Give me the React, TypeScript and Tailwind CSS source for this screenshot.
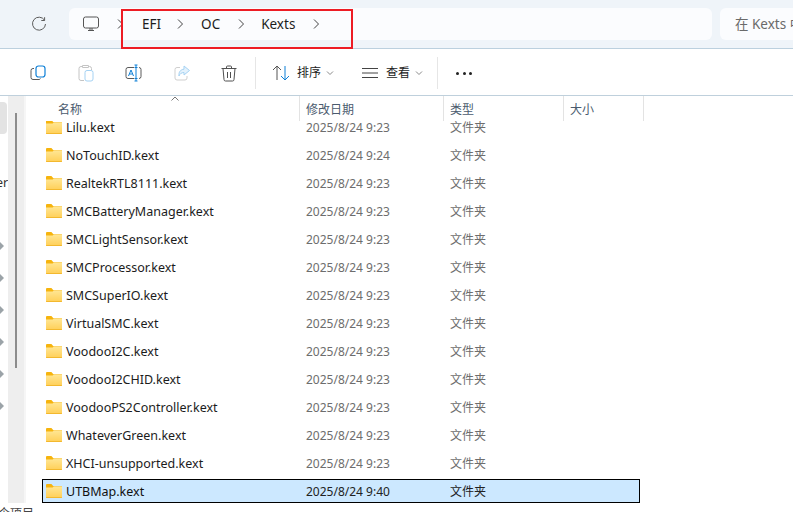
import React from 'react';

const cjk = "font-['Noto_Sans','Noto_Sans_CJK_SC',sans-serif]";

const rows = [
  ['Lilu.kext', '2025/8/24 9:23'],
  ['NoTouchID.kext', '2025/8/24 9:24'],
  ['RealtekRTL8111.kext', '2025/8/24 9:23'],
  ['SMCBatteryManager.kext', '2025/8/24 9:23'],
  ['SMCLightSensor.kext', '2025/8/24 9:23'],
  ['SMCProcessor.kext', '2025/8/24 9:23'],
  ['SMCSuperIO.kext', '2025/8/24 9:23'],
  ['VirtualSMC.kext', '2025/8/24 9:23'],
  ['VoodooI2C.kext', '2025/8/24 9:23'],
  ['VoodooI2CHID.kext', '2025/8/24 9:23'],
  ['VoodooPS2Controller.kext', '2025/8/24 9:23'],
  ['WhateverGreen.kext', '2025/8/24 9:23'],
  ['XHCI-unsupported.kext', '2025/8/24 9:23'],
];

const FolderIcon = () => (
  <svg width="16" height="14" viewBox="0 0 16 13" preserveAspectRatio="none" className="shrink-0">
    <defs>
      <linearGradient id="folderBody" x1="0" y1="0" x2="0" y2="1">
        <stop offset="0" stopColor="#ffe694" />
        <stop offset="1" stopColor="#ffcf57" />
      </linearGradient>
    </defs>
    <path d="M0 1.2C0 .5.5 0 1.2 0h4.2l2 2H16v10.2c0 .5-.3.8-.8.8H.8c-.5 0-.8-.3-.8-.8z" fill="#f6b40e" />
    <path d="M0 3.2h6.6L8 2.4h8v9.8c0 .5-.3.8-.8.8H.8c-.5 0-.8-.3-.8-.8z" fill="url(#folderBody)" />
    <path d="M0 12.2h16v.2c0 .4-.3.6-.7.6H.7c-.4 0-.7-.2-.7-.6z" fill="#f0b020" />
  </svg>
);

const Chevron = () => (
  <svg width="8" height="12" viewBox="0 0 8 12" fill="none" stroke="#444" strokeWidth="1" className="shrink-0">
    <path d="M2 1.5 6.5 6 2 10.5" />
  </svg>
);

const SmallDown = () => (
  <svg width="8" height="6" viewBox="0 0 8 6" fill="none" stroke="#8a8a8a" strokeWidth="1" className="shrink-0">
    <path d="M1 1.5 4 4.5 7 1.5" />
  </svg>
);

const Tri = () => (
  <svg width="4" height="8" viewBox="0 0 4 8" className="block shrink-0">
    <path d="M0 0 4 4 0 8z" fill="#9ba3a8" />
  </svg>
);

const Row = ({ name, date }: { name: string; date: string }) => (
  <div className="ml-4 flex h-6 w-[598px] items-center text-[12.5px]">
    <div className="flex w-[264px] items-center gap-1 pl-1 text-[#1c1c1c]">
      <FolderIcon />
      <span className="pt-[2px]">{name}</span>
    </div>
    <div className="w-[144px] pt-px text-[12px] text-[#6d6d6d]">{date}</div>
    <div className="pt-px text-[12px] text-[#6d6d6d]">文件夹</div>
  </div>
);

export default function App() {
  return (
    <div className={`relative flex h-[512px] w-[793px] flex-col overflow-hidden bg-white ${cjk}`}>
      {/* address bar */}
      <div className="flex h-[49px] shrink-0 items-center gap-2 border-b border-[#bcd0de] bg-[#eff4f9] pl-[69px]">
        <svg width="16" height="16" viewBox="0 0 16 16" fill="none" stroke="#5c5c5c" strokeWidth="1" className="absolute left-[31px] top-[16px]">
          <path d="M13.5 4.2A6.5 6.5 0 1 0 14.5 8" />
          <path d="M13.6 1.2v3.3h-3.3" />
        </svg>
        <div className="flex h-8 w-[643px] shrink-0 items-center rounded-md bg-[#fbfcfe] text-[13.5px] text-[#1c1c1c]">
          <svg width="16" height="16" viewBox="0 0 16 16" fill="none" stroke="#555" strokeWidth="1" className="ml-[14px] shrink-0">
            <rect x=".5" y="1" width="15" height="11" rx="2" />
            <path d="M5 14.5h6M7 12v2.5M9 12v2.5" />
          </svg>
          <div className="ml-[17px]"><Chevron /></div>
          <span className="ml-[18px]">EFI</span>
          <div className="ml-[15px]"><Chevron /></div>
          <span className="ml-[17px]">OC</span>
          <div className="ml-[17px]"><Chevron /></div>
          <span className="ml-[16px]">Kexts</span>
          <div className="ml-[17px]"><Chevron /></div>
        </div>
        <div className="flex h-8 flex-1 items-center rounded-l-md bg-[#fbfcfe] pl-[15px] text-[13.5px] whitespace-nowrap text-[#6a6a6a]">
          在 Kexts 中搜索
        </div>
      </div>

      {/* toolbar */}
      <div className="flex h-[47px] shrink-0 items-center border-b border-[#bfd0dc] bg-white pt-[2px]">
        <svg width="16" height="16" viewBox="0 0 16 16" fill="none" className="ml-[30px] shrink-0">
          <path d="M4 3.5H3A2 2 0 0 0 1 5.500v7A2 2 0 0 0 3 14.500h6a2 2 0 0 0 1.500-1" stroke="#5a5a5a" />
          <rect x="6" y="1" width="9" height="11" rx="2.500" stroke="#0f80d7" strokeWidth="1.200" />
        </svg>
        <svg width="16" height="18" viewBox="0 0 16 18" fill="none" className="ml-[32px] shrink-0">
          <path d="M5 2.500H3a2 2 0 0 0-2 2v10a2 2 0 0 0 2 2h3M10 2.500h1.500a2 2 0 0 1 2 2v1.500M4.500 1.500h6v2h-6z" stroke="#c4c4c4" />
          <rect x="7" y="6.500" width="8" height="10.500" rx="2" stroke="#a5d2f3" />
        </svg>
        <svg width="17" height="18" viewBox="0 0 17 18" fill="none" className="ml-[31px] shrink-0">
          <path d="M9 3.500H3a2 2 0 0 0-2 2v7a2 2 0 0 0 2 2h6M14 3.500a2 2 0 0 1 2 2v7a2 2 0 0 1-2 2" stroke="#5a5a5a" />
          <path d="M9.500 3.500h3M9.500 14.500h3M11 1v16M9.500 1h3M9.500 17h3" stroke="#0f80d7" />
          <path d="M3.500 12 6 6l2.500 6M4.500 10h3" stroke="#0f80d7" />
        </svg>
        <svg width="16" height="16" viewBox="0 0 16 16" fill="none" className="ml-[32px] shrink-0">
          <path d="M6 2.500H3a2 2 0 0 0-2 2v8.500a2 2 0 0 0 2 2h8a2 2 0 0 0 2-2v-2" stroke="#cfcfcf" />
          <path d="M10 1l5.500 4.500L10 10V7.500C7.500 7.500 5.500 9 5 11c-.5-4 1.500-6.500 5-6.800z" stroke="#a5d2f3" fill="#e4f2fc" />
        </svg>
        <svg width="16" height="17" viewBox="0 0 16 17" fill="none" stroke="#505050" className="ml-[31px] shrink-0">
          <path d="M.5 3.500h15M5.500 3.500V2a1 1 0 0 1 1-1h3a1 1 0 0 1 1 1v1.500" />
          <path d="M2 3.500l1 11a1.500 1.500 0 0 0 1.500 1.500h7a1.500 1.500 0 0 0 1.500-1.500l1-11" />
          <path d="M6.500 7v6M9.500 7v6" />
        </svg>
        <div className="ml-[18px] h-8 w-px bg-[#e6e6e6]" />
        <svg width="18" height="16" viewBox="0 0 18 16" fill="none" className="ml-[16px] shrink-0">
          <path d="M5 15V1M1 5l4-4 4 4" stroke="#555" />
          <path d="M13 1v14M9 11l4 4 4-4" stroke="#0f80d7" />
        </svg>
        <span className="ml-[7px] text-[12px] text-[#222]">排序</span>
        <div className="ml-[5px]"><SmallDown /></div>
        <svg width="16" height="12" viewBox="0 0 16 12" fill="none" stroke="#444" className="ml-[28px] shrink-0">
          <path d="M0 1.500h16M0 6h16M0 10.500h16" />
        </svg>
        <span className="ml-[8px] text-[12px] text-[#222]">查看</span>
        <div className="ml-[5px]"><SmallDown /></div>
        <div className="ml-[14px] h-8 w-px bg-[#e6e6e6]" />
        <div className="ml-[18px] flex gap-[3.5px]">
          <span className="h-[3px] w-[3px] rounded-full bg-[#222]" />
          <span className="h-[3px] w-[3px] rounded-full bg-[#222]" />
          <span className="h-[3px] w-[3px] rounded-full bg-[#222]" />
        </div>
      </div>

      {/* main */}
      <div className="flex h-[407px] shrink-0">
        {/* clipped nav pane */}
        <div className="flex w-2 shrink-0 flex-col items-start overflow-hidden">
          <div className="mt-[6px] h-8 w-[7px] rounded-r bg-[#e3e3e3]" />
          <span className="-ml-[4px] mt-[41px] text-[12.5px] leading-4 text-[#333]">er</span>
          <div className="mt-[51px] flex flex-col gap-6">
            <Tri /><Tri /><Tri /><Tri /><Tri /><Tri />
          </div>
        </div>
        {/* nav scrollbar */}
        <div className="w-4 shrink-0 bg-[#eeeeee] pl-[7px] pt-[17px]">
          <div className="h-[255px] w-[2px] bg-[#8c8c8c]" />
        </div>
        {/* file list */}
        <div className="relative flex-1 border-l-2 border-[#f6f6f6]">
          <div className="relative flex h-[25px] items-center text-[12px] text-[#4b5b6e]">
            <svg width="8" height="5" viewBox="0 0 8 5" fill="none" stroke="#777" className="absolute left-[145px] top-0">
              <path d="M.5 4.500 4 1l3.500 3.500" />
            </svg>
            <span className="ml-[32px] w-[241px] pt-[2px]">名称</span>
            <div className="flex h-full w-[144px] items-center border-l border-[#e3e3e3] pl-[6px] pt-[2px]">修改日期</div>
            <div className="flex h-full w-[120px] items-center border-l border-[#e3e3e3] pl-[6px] pt-[2px]">类型</div>
            <div className="flex h-full w-[81px] items-center border-x border-[#e3e3e3] pl-[6px] pt-[2px]">大小</div>
          </div>
          <div className="h-[382px] overflow-hidden">
            <div className="-mt-[6px] flex flex-col gap-1">
              {rows.map(r => (
                <Row key={r[0]} name={r[0]} date={r[1]} />
              ))}
              <div className="ml-4 flex h-6 w-[598px] items-center border border-black bg-[#cce8ff] text-[12.5px]">
                <div className="flex w-[263px] items-center gap-1 pl-[3px] text-[#111]">
                  <FolderIcon />
                  <span className="pt-[2px]">UTBMap.kext</span>
                </div>
                <div className="w-[144px] pt-px text-[12px] text-[#222]">2025/8/24 9:40</div>
                <div className="pt-px text-[12px] text-[#222]">文件夹</div>
              </div>
            </div>
          </div>
        </div>
      </div>

      {/* status bar, cut off by the window edge */}
      <div className="h-[9px] shrink-0 -ml-[12px] pt-[3px] text-[12px] leading-4 whitespace-nowrap text-[#444]">
        4 个项目
      </div>

      {/* red annotation box */}
      <div className="absolute left-[121px] top-[9px] h-10 w-[232px] border-2 border-[#ed1c24]" />
    </div>
  );
}
